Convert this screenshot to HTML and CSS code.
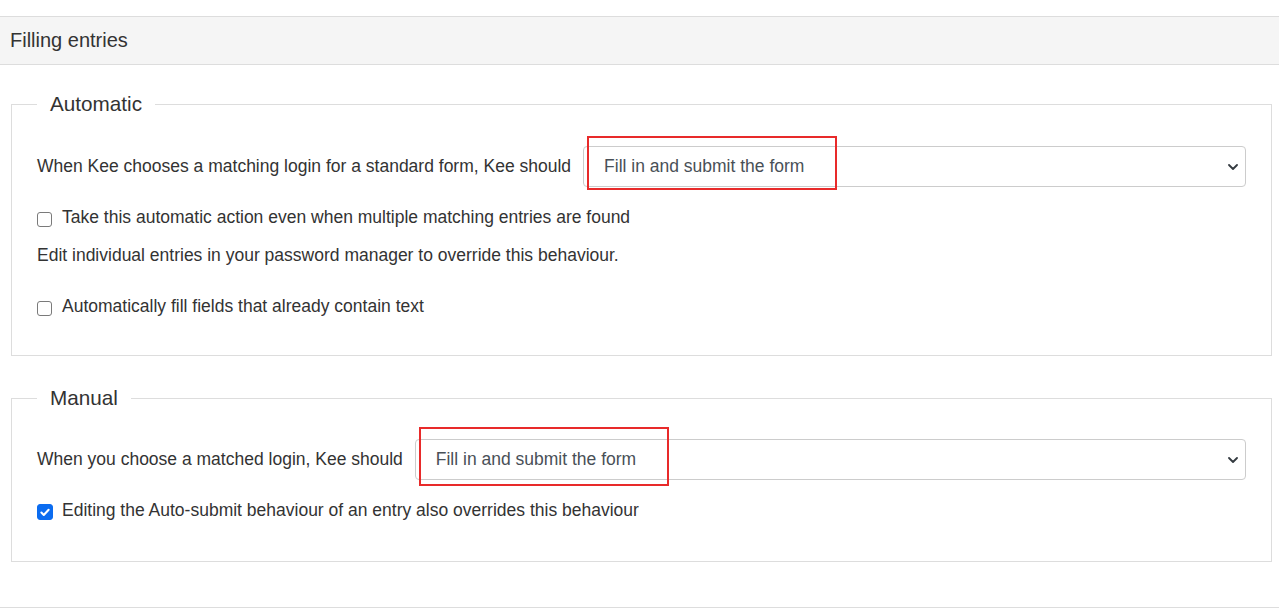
FILE: index.html
```html
<!DOCTYPE html>
<html lang="en">
<head>
<meta charset="utf-8">
<title>Filling entries</title>
<link rel="stylesheet" href="styles.css">
</head>
<body>
<div class="panel">
  <div class="panel-heading">Filling entries</div>
  <div class="panel-body">
    <fieldset class="group group-auto">
      <legend>Automatic</legend>
      <div class="field-row field-row-auto">
        <label class="field-label">When Kee chooses a matching login for a standard form, Kee should</label>
        <div class="select">
          <span class="select-value">Fill in and submit the form</span>
          <svg class="chevron" width="10" height="6" viewBox="0 0 10 6"><path d="M1 1 L5 5 L9 1" fill="none" stroke="#343a40" stroke-width="1.8" stroke-linecap="round" stroke-linejoin="round"/></svg>
          <div class="highlight highlight-auto"></div>
        </div>
      </div>
      <label class="check check-first"><span class="box"></span>Take this automatic action even when multiple matching entries are found</label>
      <p class="note">Edit individual entries in your password manager to override this behaviour.</p>
      <label class="check check-last"><span class="box"></span>Automatically fill fields that already contain text</label>
    </fieldset>

    <fieldset class="group group-manual">
      <legend>Manual</legend>
      <div class="field-row field-row-manual">
        <label class="field-label">When you choose a matched login, Kee should</label>
        <div class="select">
          <span class="select-value">Fill in and submit the form</span>
          <svg class="chevron" width="10" height="6" viewBox="0 0 10 6"><path d="M1 1 L5 5 L9 1" fill="none" stroke="#343a40" stroke-width="1.8" stroke-linecap="round" stroke-linejoin="round"/></svg>
          <div class="highlight highlight-manual"></div>
        </div>
      </div>
      <label class="check check-first"><span class="box box-checked"><svg width="15" height="15" viewBox="0 0 15 15"><path d="M3.6 7.6 L6.2 10.2 L11.4 4.6" fill="none" stroke="#fff" stroke-width="2.2" stroke-linecap="round" stroke-linejoin="round"/></svg></span>Editing the Auto-submit behaviour of an entry also overrides this behaviour</label>
    </fieldset>
  </div>
</div>
</body>
</html>
```

FILE: styles.css
```css
* {
  box-sizing: border-box;
}

html, body {
  margin: 0;
  padding: 0;
  background: #fff;
}

body {
  font-family: "Liberation Sans", Arial, sans-serif;
  font-size: 17.5px;
  line-height: 25px;
  color: #333;
}

.panel {
  margin-top: 16px;
  border-top: 1px solid #ddd;
  border-bottom: 1px solid #ddd;
}

.panel-heading {
  background: #f5f5f5;
  border-bottom: 1px solid #ddd;
  padding: 12px 10px;
  font-size: 20px;
  line-height: 23px;
  color: #333;
}

.panel-body {
  padding: 27px 7px 45px 11px;
}

.group {
  margin: 0;
  border: 1px solid #ddd;
  padding: 0 25px 36px;
  min-width: 0;
}

.group-manual {
  margin-top: 30px;
  padding-bottom: 38px;
}

.group legend {
  font-size: 20.7px;
  line-height: 24px;
  padding: 0 13px;
  margin: 0;
  color: #333;
}

.field-row {
  display: flex;
  align-items: center;
  margin-top: 30px;
}

.field-row-manual {
  margin-top: 29px;
}

.field-label {
  margin-right: 12px;
  white-space: nowrap;
}

.select {
  position: relative;
  flex: 1;
  height: 41px;
  border: 1px solid #ccc;
  border-radius: 4px;
  background: #fff;
  display: flex;
  align-items: center;
  justify-content: space-between;
  padding: 0 7px 0 20px;
  color: #495057;
}

.chevron {
  display: block;
  margin-top: 1px;
}

.highlight {
  position: absolute;
  border: 2px solid #e82a2a;
  pointer-events: none;
}

.highlight-auto {
  left: 3px;
  top: -11px;
  width: 250px;
  height: 54px;
}

.highlight-manual {
  left: 3px;
  top: -13px;
  width: 250px;
  height: 59px;
}

.check {
  display: flex;
  align-items: center;
  height: 25px;
}

.check-first {
  margin-top: 18px;
}

.check-last {
  margin-top: 26px;
}

.box {
  flex-shrink: 0;
  width: 15px;
  height: 15px;
  margin: 3px 10px 0 0;
  border: 1px solid #7a7a7a;
  border-radius: 3px;
  background: #fff;
  display: flex;
  align-items: center;
  justify-content: center;
}

.box-checked {
  width: 16px;
  height: 16px;
  margin-right: 9px;
  background: #0b6cf0;
  border-color: #0b6cf0;
}

.note {
  margin: 13px 0 0;
}
```
